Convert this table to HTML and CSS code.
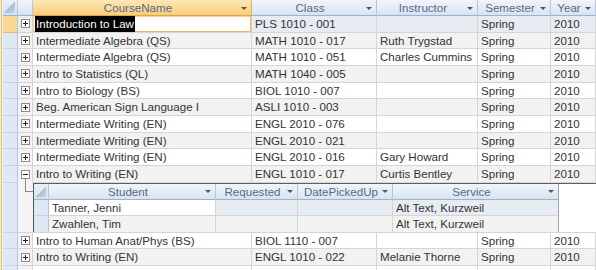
FILE: index.html
```html
<!DOCTYPE html>
<html>
<head>
  <meta charset="UTF-8">
  <title>Courses</title>
  <link rel="stylesheet" href="styles.css">
</head>
<body>
  <div class="sheet">
    <div class="row head">
      <div class="corner"><span class="tri"></span></div>
      <div class="cell blank"></div>
      <div class="cell hd on"><span class="label">CourseName</span><span class="arrow"></span></div>
      <div class="cell hd"><span class="label">Class</span><span class="arrow"></span></div>
      <div class="cell hd"><span class="label">Instructor</span><span class="arrow"></span></div>
      <div class="cell hd"><span class="label">Semester</span><span class="arrow"></span></div>
      <div class="cell hd"><span class="label">Year</span><span class="arrow"></span></div>
    </div>

    <div class="row cur">
      <div class="rs"></div>
      <div class="cell ex"><span class="box plus"></span></div>
      <div class="cell focus"><span class="hilite">Introduction to Law</span></div>
      <div class="cell">PLS 1010 - 001</div>
      <div class="cell"></div>
      <div class="cell">Spring</div>
      <div class="cell">2010</div>
    </div>
    <div class="row alt">
      <div class="rs"></div>
      <div class="cell ex"><span class="box plus"></span></div>
      <div class="cell">Intermediate Algebra (QS)</div>
      <div class="cell">MATH 1010 - 017</div>
      <div class="cell">Ruth Trygstad</div>
      <div class="cell">Spring</div>
      <div class="cell">2010</div>
    </div>
    <div class="row">
      <div class="rs"></div>
      <div class="cell ex"><span class="box plus"></span></div>
      <div class="cell">Intermediate Algebra (QS)</div>
      <div class="cell">MATH 1010 - 051</div>
      <div class="cell">Charles Cummins</div>
      <div class="cell">Spring</div>
      <div class="cell">2010</div>
    </div>
    <div class="row alt">
      <div class="rs"></div>
      <div class="cell ex"><span class="box plus"></span></div>
      <div class="cell">Intro to Statistics (QL)</div>
      <div class="cell">MATH 1040 - 005</div>
      <div class="cell"></div>
      <div class="cell">Spring</div>
      <div class="cell">2010</div>
    </div>
    <div class="row">
      <div class="rs"></div>
      <div class="cell ex"><span class="box plus"></span></div>
      <div class="cell">Intro to Biology (BS)</div>
      <div class="cell">BIOL 1010 - 007</div>
      <div class="cell"></div>
      <div class="cell">Spring</div>
      <div class="cell">2010</div>
    </div>
    <div class="row alt">
      <div class="rs"></div>
      <div class="cell ex"><span class="box plus"></span></div>
      <div class="cell">Beg. American Sign Language I</div>
      <div class="cell">ASLI 1010 - 003</div>
      <div class="cell"></div>
      <div class="cell">Spring</div>
      <div class="cell">2010</div>
    </div>
    <div class="row">
      <div class="rs"></div>
      <div class="cell ex"><span class="box plus"></span></div>
      <div class="cell">Intermediate Writing (EN)</div>
      <div class="cell">ENGL 2010 - 076</div>
      <div class="cell"></div>
      <div class="cell">Spring</div>
      <div class="cell">2010</div>
    </div>
    <div class="row alt">
      <div class="rs"></div>
      <div class="cell ex"><span class="box plus"></span></div>
      <div class="cell">Intermediate Writing (EN)</div>
      <div class="cell">ENGL 2010 - 021</div>
      <div class="cell"></div>
      <div class="cell">Spring</div>
      <div class="cell">2010</div>
    </div>
    <div class="row">
      <div class="rs"></div>
      <div class="cell ex"><span class="box plus"></span></div>
      <div class="cell">Intermediate Writing (EN)</div>
      <div class="cell">ENGL 2010 - 016</div>
      <div class="cell">Gary Howard</div>
      <div class="cell">Spring</div>
      <div class="cell">2010</div>
    </div>
    <div class="row alt open-row">
      <div class="rs"></div>
      <div class="cell ex open"><span class="box"></span><span class="stem"></span></div>
      <div class="cell">Intro to Writing (EN)</div>
      <div class="cell">ENGL 1010 - 017</div>
      <div class="cell">Curtis Bentley</div>
      <div class="cell">Spring</div>
      <div class="cell">2010</div>
    </div>

    <!-- subdatasheet for the expanded course -->
    <div class="subrow">
      <div class="rs"></div>
      <div class="tree"><span class="elbow"></span></div>
      <div class="subwrap">
        <div class="sub">
          <div class="srow head">
            <div class="corner"><span class="tri"></span></div>
            <div class="cell hd"><span class="label">Student</span><span class="arrow"></span></div>
            <div class="cell hd"><span class="label">Requested</span><span class="arrow"></span></div>
            <div class="cell hd"><span class="label">DatePickedUp</span><span class="arrow"></span></div>
            <div class="cell hd"><span class="label">Service</span><span class="arrow"></span></div>
          </div>
          <div class="srow cur">
            <div class="rs"></div>
            <div class="cell first">Tanner, Jenni</div>
            <div class="cell"></div>
            <div class="cell"></div>
            <div class="cell">Alt Text, Kurzweil</div>
          </div>
          <div class="srow alt">
            <div class="rs"></div>
            <div class="cell">Zwahlen, Tim</div>
            <div class="cell"></div>
            <div class="cell"></div>
            <div class="cell">Alt Text, Kurzweil</div>
          </div>
        </div>
      </div>
    </div>

    <div class="row">
      <div class="rs"></div>
      <div class="cell ex"><span class="box plus"></span></div>
      <div class="cell">Intro to Human Anat/Phys (BS)</div>
      <div class="cell">BIOL 1110 - 007</div>
      <div class="cell"></div>
      <div class="cell">Spring</div>
      <div class="cell">2010</div>
    </div>
    <div class="row alt">
      <div class="rs"></div>
      <div class="cell ex"><span class="box plus"></span></div>
      <div class="cell">Intro to Writing (EN)</div>
      <div class="cell">ENGL 1010 - 022</div>
      <div class="cell">Melanie Thorne</div>
      <div class="cell">Spring</div>
      <div class="cell">2010</div>
    </div>
    <div class="row">
      <div class="rs"></div>
      <div class="cell ex"></div>
      <div class="cell"></div>
      <div class="cell"></div>
      <div class="cell"></div>
      <div class="cell"></div>
      <div class="cell"></div>
    </div>
  </div>
</body>
</html>
```

FILE: styles.css
```css
:root {
  --grid: #d5d5d5;
  --text: #333333;
  --head-text: #56698a;
  --sel-bg: #dfe8f5;
  --alt-bg: #f2f2f2;
  --cur-bg: #e7ebf2;
}

* {
  box-sizing: border-box;
}

body {
  margin: 0;
  width: 596px;
  height: 270px;
  overflow: hidden;
  background: #ffffff;
  font-family: "Liberation Sans", Arial, sans-serif;
  font-size: 11.6px;
  color: var(--text);
}

.sheet {
  padding-left: 3px;
  background: linear-gradient(to right, #f6efc6 0 1px, #d6c47c 1px 2px, #eef2f8 2px 3px) no-repeat;
  background-size: 3px 100%;
}

.row {
  display: grid;
  grid-template-columns: 15px 15px 219px 125px 101px 73px 45px;
  height: 16.67px;
}

.row.head {
  height: 16px;
}

.cell {
  border-right: 1px solid var(--grid);
  border-bottom: 1px solid var(--grid);
  padding: 0 3px;
  line-height: 15.5px;
  white-space: nowrap;
  overflow: hidden;
}

.alt .cell {
  background: var(--alt-bg);
}

.cur .cell {
  background: var(--cur-bg);
}

/* headers */
.head .cell {
  background: linear-gradient(#f1f5fb, #d9e3f0);
  border-right: 1px solid #b6c7db;
  border-bottom: 1px solid #9db3cc;
  color: var(--head-text);
}

.head .hd {
  display: flex;
  align-items: center;
  padding: 0 4px 0 2px;
}

.head .hd.on {
  background: linear-gradient(#fde8b6, #f8cd78);
  border-right-color: #e2b46a;
  border-bottom-color: #d9a552;
}

.label {
  flex: 1;
  text-align: center;
}

.arrow {
  width: 0;
  height: 0;
  border-left: 3px solid transparent;
  border-right: 3px solid transparent;
  border-top: 3px solid #555555;
  margin-top: 1px;
}

.corner {
  display: flex;
  align-items: flex-end;
  justify-content: flex-end;
  padding: 0 2px 2px 0;
  background: linear-gradient(#eaf0f8, #d7e2ef);
  border-right: 1px solid #b6c7db;
  border-bottom: 1px solid #9db3cc;
}

.tri {
  width: 11px;
  height: 11px;
  background: linear-gradient(135deg, transparent 50%, #a9bdd6 50%, #c7d5e7);
}

/* row selectors and expanders */
.rs {
  background: var(--sel-bg);
  border-right: 1px solid #b3c5db;
  border-bottom: 1px solid #c6d4e6;
}

.row.cur .rs {
  background: #fbd894;
  border-bottom-color: #e6bd6e;
}

.cell.ex {
  display: flex;
  align-items: center;
  justify-content: center;
  padding: 0;
  background: #f4f4f4;
}

.cur .cell.ex {
  background: #ececec;
}

.box {
  position: relative;
  width: 9px;
  height: 9px;
  border: 1px solid #8e8e8e;
  background: #ffffff;
}

.box::before {
  content: "";
  position: absolute;
  left: 1px;
  top: 3px;
  width: 5px;
  height: 1px;
  background: #222222;
}

.box.plus::after {
  content: "";
  position: absolute;
  left: 3px;
  top: 1px;
  width: 1px;
  height: 5px;
  background: #222222;
}

.cell.ex.open {
  flex-direction: column;
  justify-content: flex-end;
  border-bottom: none;
}

.stem {
  width: 1px;
  height: 4px;
  background: #8a8a8a;
}

.focus.cell {
  background: #ffffff;
  box-shadow: inset -1px -1px 0 #f2b25a, inset 1px 1px 0 #f8d08e;
  padding-left: 2px;
}

.hilite {
  background: #000000;
  color: #ffffff;
  padding: 1px 1px 2px;
}

/* subdatasheet */
.subrow {
  display: grid;
  grid-template-columns: 15px 15px 1fr;
  height: 50px;
}

.tree {
  background: #f4f4f4;
  border-bottom: 1px solid var(--grid);
}

.elbow {
  display: block;
  margin-left: 7px;
  width: 8px;
  height: 9px;
  border-left: 1px solid #8a8a8a;
  border-bottom: 1px solid #8a8a8a;
}

.subwrap {
  border-top: 1px solid #5f5f5f;
  border-bottom: 1px solid var(--grid);
  background: #ffffff;
}

.sub {
  width: 526px;
  height: 48px;
  border-left: 1px solid #555555;
  border-right: 1px solid #a3a3a3;
}

.srow {
  display: grid;
  grid-template-columns: 15px 167px 82px 95px 165px;
  height: 16px;
}

.srow .cell {
  line-height: 15px;
}

.srow.cur .cell.first {
  background: #ffffff;
}

.srow .cell:last-child {
  border-right: none;
}

.srow.alt .cell,
.srow.alt .rs {
  border-bottom: none;
}
```
